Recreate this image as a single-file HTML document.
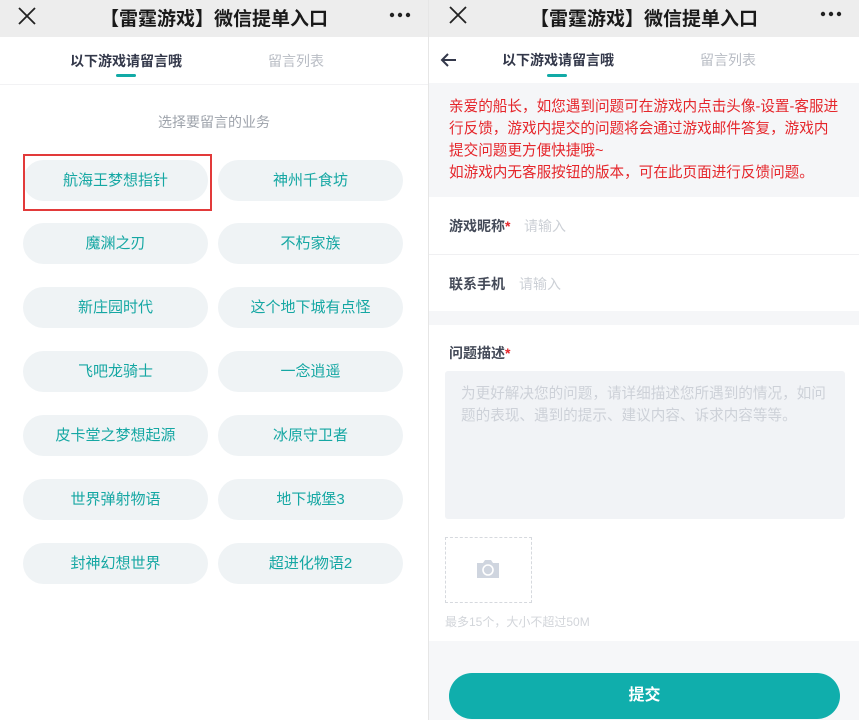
<!DOCTYPE html>
<html><head><meta charset="utf-8"><style>
*{margin:0;padding:0;box-sizing:border-box}
body{width:859px;height:720px;overflow:hidden;background:#fff;font-family:"Liberation Sans","Noto Sans CJK SC",sans-serif;position:relative}
.p{position:absolute;top:0;height:720px;overflow:hidden;background:#fff}
.hd{position:absolute;left:0;top:0;width:100%;height:37px;background:#ededed}
.hd .t{position:absolute;left:0;right:0;top:4px;text-align:center;font-size:19px;color:#1a1a1a;font-weight:bold}
.ab{position:absolute}
.tab1{font-size:14px;color:#33384a;font-weight:bold}
.tab2{font-size:14px;color:#b8bcc4}
.ul{position:absolute;height:3px;width:20px;background:#12aaa6;border-radius:2px}
.btn{position:absolute;width:185px;height:41px;border-radius:21px;background:#eff3f5;color:#15a7a3;font-size:15px;text-align:center;line-height:41px}
.lbl{font-size:14px;color:#444a58;font-weight:bold}
.ph{font-size:14px;color:#ccd0d6}
</style></head><body>
<div class="p" style="left:0;width:428px">
 <div class="hd"><svg class="ab" style="left:18px;top:7px" width="18" height="18" viewBox="0 0 18 18"><path d="M1 1L17 17M17 1L1 17" stroke="#222" stroke-width="1.8"/></svg><div class="t">【雷霆游戏】微信提单入口</div><svg class="ab" style="left:389px;top:12px" width="22" height="6"><circle cx="3" cy="3" r="2.2" fill="#222"/><circle cx="11" cy="3" r="2.2" fill="#222"/><circle cx="19" cy="3" r="2.2" fill="#222"/></svg></div>
 <div class="ab tab1" style="left:70px;top:51px">以下游戏请留言哦</div>
 <div class="ul" style="left:116px;top:74px"></div>
 <div class="ab tab2" style="left:268px;top:51px">留言列表</div>
 <div class="ab" style="left:0;top:84px;width:428px;height:1px;background:#f2f2f4"></div>
 <div class="ab" style="left:0;width:428px;top:112px;text-align:center;font-size:14px;color:#9ea3ab">选择要留言的业务</div>
 <div class="btn" style="left:23px;top:160px">航海王梦想指针</div>
 <div class="btn" style="left:218px;top:160px">神州千食坊</div>
 <div class="ab" style="left:23px;top:154px;width:189px;height:57px;border:2px solid #e23a3a"></div>
 <div class="btn" style="left:23px;top:223px">魔渊之刃</div>
 <div class="btn" style="left:218px;top:223px">不朽家族</div>
 <div class="btn" style="left:23px;top:287px">新庄园时代</div>
 <div class="btn" style="left:218px;top:287px">这个地下城有点怪</div>
 <div class="btn" style="left:23px;top:351px">飞吧龙骑士</div>
 <div class="btn" style="left:218px;top:351px">一念逍遥</div>
 <div class="btn" style="left:23px;top:415px">皮卡堂之梦想起源</div>
 <div class="btn" style="left:218px;top:415px">冰原守卫者</div>
 <div class="btn" style="left:23px;top:479px">世界弹射物语</div>
 <div class="btn" style="left:218px;top:479px">地下城堡3</div>
 <div class="btn" style="left:23px;top:543px">封神幻想世界</div>
 <div class="btn" style="left:218px;top:543px">超进化物语2</div>
</div>
<div class="ab" style="left:428px;top:0;width:1px;height:720px;background:#e6e6e6"></div>
<div class="p" style="left:429px;width:430px">
 <div class="hd"><svg class="ab" style="left:20px;top:6px" width="18" height="18" viewBox="0 0 18 18"><path d="M1 1L17 17M17 1L1 17" stroke="#222" stroke-width="1.8"/></svg><div class="t">【雷霆游戏】微信提单入口</div><svg class="ab" style="left:391px;top:11px" width="22" height="6"><circle cx="3" cy="3" r="2.2" fill="#222"/><circle cx="11" cy="3" r="2.2" fill="#222"/><circle cx="19" cy="3" r="2.2" fill="#222"/></svg></div>
 <svg class="ab" style="left:11px;top:52px" width="18" height="16" viewBox="0 0 18 16"><path d="M16 8H3M8 2L2 8l6 6" stroke="#33384a" stroke-width="2" fill="none"/></svg>
 <div class="ab tab1" style="left:73px;top:50px">以下游戏请留言哦</div>
 <div class="ul" style="left:118px;top:74px"></div>
 <div class="ab tab2" style="left:271px;top:50px">留言列表</div>
 <div class="ab" style="left:0;top:83px;width:430px;height:114px;background:#f5f6f8"></div>
 <div class="ab" style="left:20px;top:96px;white-space:nowrap;font-size:14.6px;line-height:22px;color:#e5262b">亲爱的船长，如您遇到问题可在游戏内点击头像-设置-客服进<br>行反馈，游戏内提交的问题将会通过游戏邮件答复，游戏内<br>提交问题更方便快捷哦~<br>如游戏内无客服按钮的版本，可在此页面进行反馈问题。</div>
 <div class="ab lbl" style="left:20px;top:216px">游戏昵称<span style="color:#e5262b">*</span></div>
 <div class="ab ph" style="left:95px;top:216px">请输入</div>
 <div class="ab" style="left:0;top:254px;width:430px;height:1px;background:#f0f0f2"></div>
 <div class="ab lbl" style="left:20px;top:274px">联系手机</div>
 <div class="ab ph" style="left:90px;top:274px">请输入</div>
 <div class="ab" style="left:0;top:311px;width:430px;height:14px;background:#f5f6f8"></div>
 <div class="ab lbl" style="left:20px;top:343px">问题描述<span style="color:#e5262b">*</span></div>
 <div class="ab" style="left:16px;top:371px;width:400px;height:148px;background:#f1f3f6;border-radius:3px"></div>
 <div class="ab" style="left:32px;top:383px;white-space:nowrap;font-size:14.6px;line-height:22px;color:#cdd1d8">为更好解决您的问题，请详细描述您所遇到的情况，如问<br>题的表现、遇到的提示、建议内容、诉求内容等等。</div>
 <div class="ab" style="left:16px;top:537px;width:87px;height:66px;border:1px dashed #d6d9de"></div>
 <svg class="ab" style="left:46px;top:558px" width="26" height="22" viewBox="0 0 26 22"><path d="M2 5h6l2-3h6l2 3h6v15H2z" fill="#cfd5df"/><circle cx="13" cy="12" r="5" fill="none" stroke="#fff" stroke-width="1.6"/></svg>
 <div class="ab" style="left:16px;top:613px;font-size:12px;color:#d2d5da">最多15个，大小不超过50M</div>
 <div class="ab" style="left:0;top:641px;width:430px;height:79px;background:#f6f7f9"></div>
 <div class="ab" style="left:20px;top:673px;width:391px;height:46px;border-radius:23px;background:#10aeac;color:#fff;font-size:16px;font-weight:bold;text-align:center;line-height:46px">提交</div>
</div>
</body></html>
